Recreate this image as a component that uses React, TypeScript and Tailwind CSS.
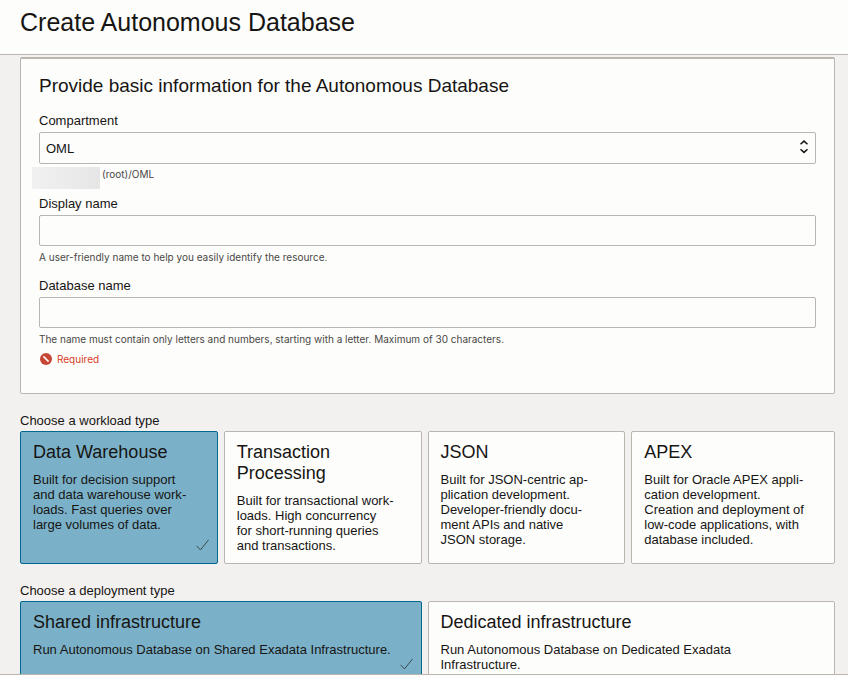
import { useState, type ReactNode } from "react";

type Option = { id: string; title: string; body: string };

const workloads: Option[] = [
  {
    id: "dw",
    title: "Data Warehouse",
    body: "Built for decision support and data warehouse work\u00ADloads. Fast queries over large volumes of data.",
  },
  {
    id: "tp",
    title: "Transaction Processing",
    body: "Built for transactional work\u00ADloads. High concurrency for short-running queries and transactions.",
  },
  {
    id: "json",
    title: "JSON",
    body: "Built for JSON-centric ap\u00ADplication development. Developer-friendly docu\u00ADment APIs and native JSON storage.",
  },
  {
    id: "apex",
    title: "APEX",
    body: "Built for Oracle APEX appli\u00ADcation development. Creation and deployment of low-code applications, with database included.",
  },
];

const deployments: Option[] = [
  {
    id: "shared",
    title: "Shared infrastructure",
    body: "Run Autonomous Database on Shared Exadata Infrastructure.",
  },
  {
    id: "dedicated",
    title: "Dedicated infrastructure",
    body: "Run Autonomous Database on Dedicated Exadata Infrastructure.",
  },
];

function CheckMark() {
  return (
    <svg
      className="absolute right-2 bottom-3 h-3 w-[13px]"
      viewBox="0 0 13 12"
      fill="none"
      stroke="#3b4a50"
      aria-hidden="true"
    >
      <path d="M0.6 6.8 L4.4 11 L12.6 0.8" />
    </svg>
  );
}

function Choice({
  name,
  option,
  checked,
  onSelect,
}: {
  name: string;
  option: Option;
  checked: boolean;
  onSelect: () => void;
}) {
  return (
    <label
      className={`relative mr-[6px] block cursor-pointer rounded-[2px] border pt-[10px] pr-[26px] pb-[10px] pl-3 last:mr-0 ${
        checked ? "border-[#00688c] bg-[#7bb1c8]" : "border-[#bbb5af] bg-[#fdfdfc]"
      }`}
    >
      <input
        type="radio"
        name={name}
        value={option.id}
        checked={checked}
        onChange={onSelect}
        className="sr-only"
      />
      <span className="block text-[18px] leading-[21px]">{option.title}</span>
      <span className="mt-[9px] block">{option.body}</span>
      {checked && <CheckMark />}
    </label>
  );
}

function ChoiceGroup({
  legend,
  name,
  options,
  columns,
}: {
  legend: string;
  name: string;
  options: Option[];
  columns: string;
}) {
  const [selected, setSelected] = useState(options[0].id);
  return (
    <fieldset className="mt-[19px]">
      <legend className="mb-[3px]">{legend}</legend>
      <div className={`grid ${columns}`}>
        {options.map((o) => (
          <Choice
            key={o.id}
            name={name}
            option={o}
            checked={o.id === selected}
            onSelect={() => setSelected(o.id)}
          />
        ))}
      </div>
    </fieldset>
  );
}

function Hint({ id, children }: { id: string; children: ReactNode }) {
  return (
    <p id={id} className="font-[Inter,sans-serif] text-[10px] leading-3 text-[#4a4845]">
      {children}
    </p>
  );
}

function TextField({ id, label, hint }: { id: string; label: string; hint: string }) {
  return (
    <div className="mt-[15px]">
      <label htmlFor={id} className="block">
        {label}
      </label>
      <input
        id={id}
        type="text"
        aria-describedby={`${id}-hint`}
        className="mt-1 mb-[5px] block h-[31px] w-full rounded-[2px] border border-[#bbb5af] bg-[#fdfdfc] px-[6px] outline-none"
      />
      <Hint id={`${id}-hint`}>{hint}</Hint>
    </div>
  );
}

export default function App() {
  return (
    <div className="flex h-screen flex-col bg-[#f3f1f0] font-['Liberation_Sans',Arial,sans-serif] text-[13px] leading-[15px] text-[#161513]">
      <header className="shrink-0 border-b border-[#bbb5af] bg-[#fdfdfc] px-5 pt-2 pb-[18px]">
        <h1 className="text-[25px] leading-7">Create Autonomous Database</h1>
      </header>

      <main className="min-h-0 flex-1 overflow-hidden pt-[2px] pr-[13px] pl-5">
        <section className="rounded-[2px] border border-t-2 border-[#bbb5af] bg-[#fdfdfc] px-[18px] pt-4 pb-7">
          <h2 className="text-[19px] leading-[22px]">
            Provide basic information for the Autonomous Database
          </h2>

          <div className="mt-4">
            <label htmlFor="compartment" className="block">
              Compartment
            </label>
            <div className="relative mt-1">
              <select
                id="compartment"
                aria-describedby="compartment-hint"
                className="block h-8 w-full appearance-none rounded-[2px] border border-[#bbb5af] bg-[#fdfdfc] px-[6px] outline-none"
              >
                <option>OML</option>
              </select>
              <svg
                className="pointer-events-none absolute top-2 right-2 h-[14px] w-2"
                viewBox="0 0 8 14"
                fill="none"
                stroke="#161513"
                strokeWidth="1.5"
                aria-hidden="true"
              >
                <path d="M0.5 4.3 L4 1.1 L7.5 4.3 M0.5 9.2 L4 12.4 L7.5 9.2" />
              </svg>
            </div>
            <div className="flex gap-[2px]">
              <span className="mt-[3px] mb-[-8px] ml-[-7px] h-[22px] w-[68px] bg-linear-to-r from-[#f1f1f1] to-[#e6e6e6]" />
              <div className="pt-1">
                <Hint id="compartment-hint">(root)/OML</Hint>
              </div>
            </div>
          </div>

          <TextField
            id="display-name"
            label="Display name"
            hint="A user-friendly name to help you easily identify the resource."
          />
          <TextField
            id="database-name"
            label="Database name"
            hint="The name must contain only letters and numbers, starting with a letter. Maximum of 30 characters."
          />
          <p className="mt-2 flex items-center gap-[5px] pl-px font-[Inter,sans-serif] text-[10px] leading-3 text-[#d63b25]">
            <svg className="size-3" viewBox="0 0 12 12" aria-hidden="true">
              <circle cx="6" cy="6" r="6" fill="#c74634" />
              <path d="M3.4 3.4 L8.6 8.6" stroke="#fdfdfc" strokeWidth="1.5" />
            </svg>
            Required
          </p>
        </section>

        <ChoiceGroup
          legend="Choose a workload type"
          name="workload"
          options={workloads}
          columns="grid-cols-4"
        />
        <ChoiceGroup
          legend="Choose a deployment type"
          name="deployment"
          options={deployments}
          columns="grid-cols-2"
        />
      </main>

      <footer className="h-1 shrink-0 border-t border-[#bbb5af] bg-[#fdfdfc]" />
    </div>
  );
}
